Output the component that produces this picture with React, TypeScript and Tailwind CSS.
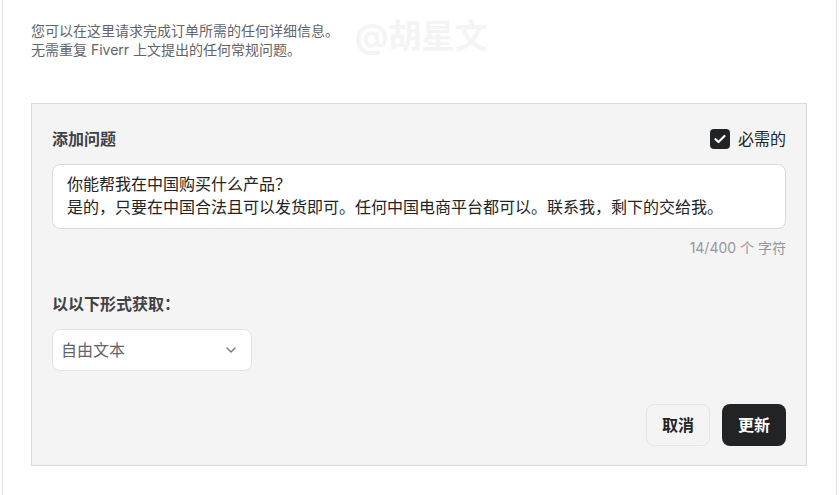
import { ChevronDown } from "lucide-react";

export default function App() {
  return (
    <div className="w-[840px] h-[495px] bg-white overflow-hidden font-['Inter','Noto_Sans_CJK_SC',sans-serif]">
      <div className="relative ml-[2px] w-[835px] h-full border-l border-r border-[#e4e5e7] pl-[28px] pt-[21px]">
        <Intro />
        <div
          aria-hidden
          className="absolute left-[352px] top-[14px] text-[33px] leading-[44px] font-bold text-[#f4f4f4] select-none"
        >
          @胡星文
        </div>
        <QuestionPanel />
      </div>
    </div>
  );
}

function Intro() {
  return (
    <div className="relative z-10 text-[14px] leading-[19px] text-[#62646a]">
      <p>您可以在这里请求完成订单所需的任何详细信息。</p>
      <p>无需重复 Fiverr 上文提出的任何常规问题。</p>
    </div>
  );
}

function QuestionPanel() {
  return (
    <div className="mt-[44px] w-[776px] h-[363px] bg-[#f4f4f4] border border-[#dadbdd] px-[20px] pt-[25px] flex flex-col">
      <div className="flex items-center justify-between h-[20px]">
        <span className="text-[16px] font-bold text-[#404145]">添加问题</span>
        <label className="flex items-center gap-[8px] text-[16px] text-[#222325]">
          <span className="w-[20px] h-[20px] rounded-[4px] bg-[#222325] flex items-center justify-center">
            <svg width="12" height="10" viewBox="0 0 12 10" fill="none">
              <path d="M1.5 5.2 4.5 8 10.5 2" stroke="white" strokeWidth="2.2" strokeLinecap="round" strokeLinejoin="round" />
            </svg>
          </span>
          必需的
        </label>
      </div>

      <div className="mt-[15px] h-[65px] bg-white border border-[#dadbdd] rounded-[8px] px-[14px] py-[8px] text-[16px] leading-[23px] text-[#222325]">
        <p>你能帮我在中国购买什么产品？</p>
        <p>是的，只要在中国合法且可以发货即可。任何中国电商平台都可以。联系我，剩下的交给我。</p>
      </div>
      <div className="mt-[9px] text-right text-[14px] leading-[20px] text-[#95979d]">14/400 个 字符</div>

      <div className="mt-[36px] text-[16px] leading-[20px] font-bold text-[#404145]">以以下形式获取：</div>
      <div className="mt-[15px] w-[200px] h-[42px] bg-white border border-[#e4e5e7] rounded-[8px] pl-[8px] pr-[12px] flex items-center justify-between">
        <span className="text-[16px] text-[#62646a]">自由文本</span>
        <ChevronDown size={16} strokeWidth={2} className="text-[#74767e]" />
      </div>

      <div className="mt-[33px] flex justify-end gap-[12px]">
        <button className="w-[64px] h-[42px] rounded-[8px] border border-[#e4e5e7] bg-[#f4f4f4] text-[16px] font-bold text-[#222325]">
          取消
        </button>
        <button className="w-[64px] h-[42px] rounded-[8px] bg-[#222325] text-[16px] font-bold text-white">
          更新
        </button>
      </div>
    </div>
  );
}
